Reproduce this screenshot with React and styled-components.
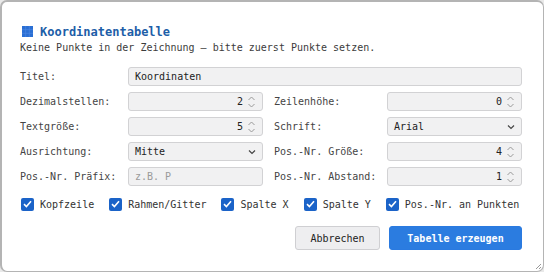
import React from "react";
import styled, { createGlobalStyle } from "styled-components";

const GlobalStyle = createGlobalStyle`
  html, body { margin: 0; padding: 0; background: #e9e9e9; }
  * { box-sizing: border-box; }
`;

const Dialog = styled.div`
  position: relative;
  width: 544px;
  height: 272px;
  background: #fff;
  border: 1px solid #b4b4b4;
  border-left-width: 2px;
  border-top-width: 2px;
  border-radius: 7px;
  padding: 21px 21px 0 18px;
  font-family: "DejaVu Sans Mono", monospace;
  font-size: 10px;
  color: #333;
`;

const Header = styled.div`
  display: flex;
  align-items: center;
  gap: 7px;
  height: 17px;
  margin-left: 2px;
`;

const Title = styled.div`
  font-size: 12px;
  font-weight: bold;
  color: #1d5ea8;
`;

const Subtitle = styled.div`
  margin-top: 1px;
  height: 14px;
  line-height: 14px;
  color: #3c3c3c;
`;

const Form = styled.div`
  display: grid;
  grid-template-columns: 97px 135px 102px 135px;
  column-gap: 11px;
  row-gap: 6px;
  margin-top: 12px;
`;

const Label = styled.div`
  display: flex;
  align-items: center;
  white-space: nowrap;
  color: #444;
  height: 19px;
`;

const Field = styled.div`
  display: flex;
  align-items: center;
  height: 19px;
  grid-column: ${(p) => p.$span || "auto"};
  background: #f1f1f2;
  border: 1px solid #d2d2d4;
  border-radius: 3px;
  padding: 0 6px;
  color: ${(p) => (p.$placeholder ? "#9a9a9a" : "#222")};
  justify-content: ${(p) => (p.$num ? "flex-end" : "space-between")};
`;

const Value = styled.span`
  flex: ${(p) => (p.$grow ? 1 : "none")};
`;

const Spin = styled.svg`
  margin-left: 4px;
`;

const Checks = styled.div`
  display: flex;
  align-items: center;
  gap: 15px;
  margin-top: 11px;
  margin-left: 1px;
  height: 14px;
`;

const CheckItem = styled.label`
  display: flex;
  align-items: center;
  gap: 6px;
  color: #333;
`;

const Box = styled.span`
  display: inline-flex;
  align-items: center;
  justify-content: center;
  width: 13px;
  height: 13px;
  border-radius: 2px;
  background: #1b63c8;
`;

const Footer = styled.div`
  display: flex;
  justify-content: flex-end;
  gap: 9px;
  margin-top: 15px;
`;

const Button = styled.button`
  height: 24px;
  padding: 0;
  width: ${(p) => p.$w}px;
  font-family: "DejaVu Sans Mono", monospace;
  font-size: 10px;
  border-radius: 3px;
  border: 1px solid ${(p) => (p.$primary ? "#2a7ae0" : "#cfcfd2")};
  background: ${(p) => (p.$primary ? "#2b7ce0" : "#eeeef0")};
  color: ${(p) => (p.$primary ? "#fff" : "#222")};
  font-weight: ${(p) => (p.$primary ? "bold" : "normal")};
`;

const Grip = styled.svg`
  position: absolute;
  right: 1px;
  bottom: 1px;
`;

function Spinner() {
  return (
    <Spin width="9" height="14" viewBox="0 0 9 14">
      <path d="M1.5 5 L4.5 2 L7.5 5" fill="none" stroke="#9a9a9a" strokeWidth="1" />
      <path d="M1.5 9 L4.5 12 L7.5 9" fill="none" stroke="#9a9a9a" strokeWidth="1" />
    </Spin>
  );
}

function Chevron() {
  return (
    <svg width="8" height="6" viewBox="0 0 8 6">
      <path d="M1 1.5 L4 4.5 L7 1.5" fill="none" stroke="#444" strokeWidth="1.2" />
    </svg>
  );
}

function Check() {
  return (
    <svg width="9" height="8" viewBox="0 0 9 8">
      <path d="M1 4.2 L3.4 6.5 L8 1.2" fill="none" stroke="#fff" strokeWidth="1.6" />
    </svg>
  );
}

function GridIcon() {
  return (
    <svg width="11" height="11" viewBox="0 0 11 11">
      <rect width="11" height="11" fill="#2a6fd4" />
      <path d="M3.7 0 V11 M7.3 0 V11 M0 3.7 H11 M0 7.3 H11" stroke="#4f8ae4" strokeWidth="0.6" />
    </svg>
  );
}

const checks = ["Kopfzeile", "Rahmen/Gitter", "Spalte X", "Spalte Y", "Pos.-Nr. an Punkten"];

export default function App() {
  return (
    <>
      <GlobalStyle />
      <Dialog>
        <Header>
          <GridIcon />
          <Title>Koordinatentabelle</Title>
        </Header>
        <Subtitle>Keine Punkte in der Zeichnung — bitte zuerst Punkte setzen.</Subtitle>
        <Form>
          <Label>Titel:</Label>
          <Field $span="2 / 5">Koordinaten</Field>

          <Label>Dezimalstellen:</Label>
          <Field $num>2<Spinner /></Field>
          <Label>Zeilenhöhe:</Label>
          <Field $num>0<Spinner /></Field>

          <Label>Textgröße:</Label>
          <Field $num>5<Spinner /></Field>
          <Label>Schrift:</Label>
          <Field><Value $grow>Arial</Value><Chevron /></Field>

          <Label>Ausrichtung:</Label>
          <Field><Value $grow>Mitte</Value><Chevron /></Field>
          <Label>Pos.-Nr. Größe:</Label>
          <Field $num>4<Spinner /></Field>

          <Label>Pos.-Nr. Präfix:</Label>
          <Field $placeholder>z.B. P</Field>
          <Label>Pos.-Nr. Abstand:</Label>
          <Field $num>1<Spinner /></Field>
        </Form>
        <Checks>
          {checks.map((c) => (
            <CheckItem key={c}>
              <Box><Check /></Box>
              {c}
            </CheckItem>
          ))}
        </Checks>
        <Footer>
          <Button $w={85}>Abbrechen</Button>
          <Button $w={133} $primary>Tabelle erzeugen</Button>
        </Footer>
        <Grip width="8" height="8" viewBox="0 0 8 8">
          <path d="M7 2 L2 7 M7 5 L5 7" stroke="#999" strokeWidth="1" />
        </Grip>
      </Dialog>
    </>
  );
}
